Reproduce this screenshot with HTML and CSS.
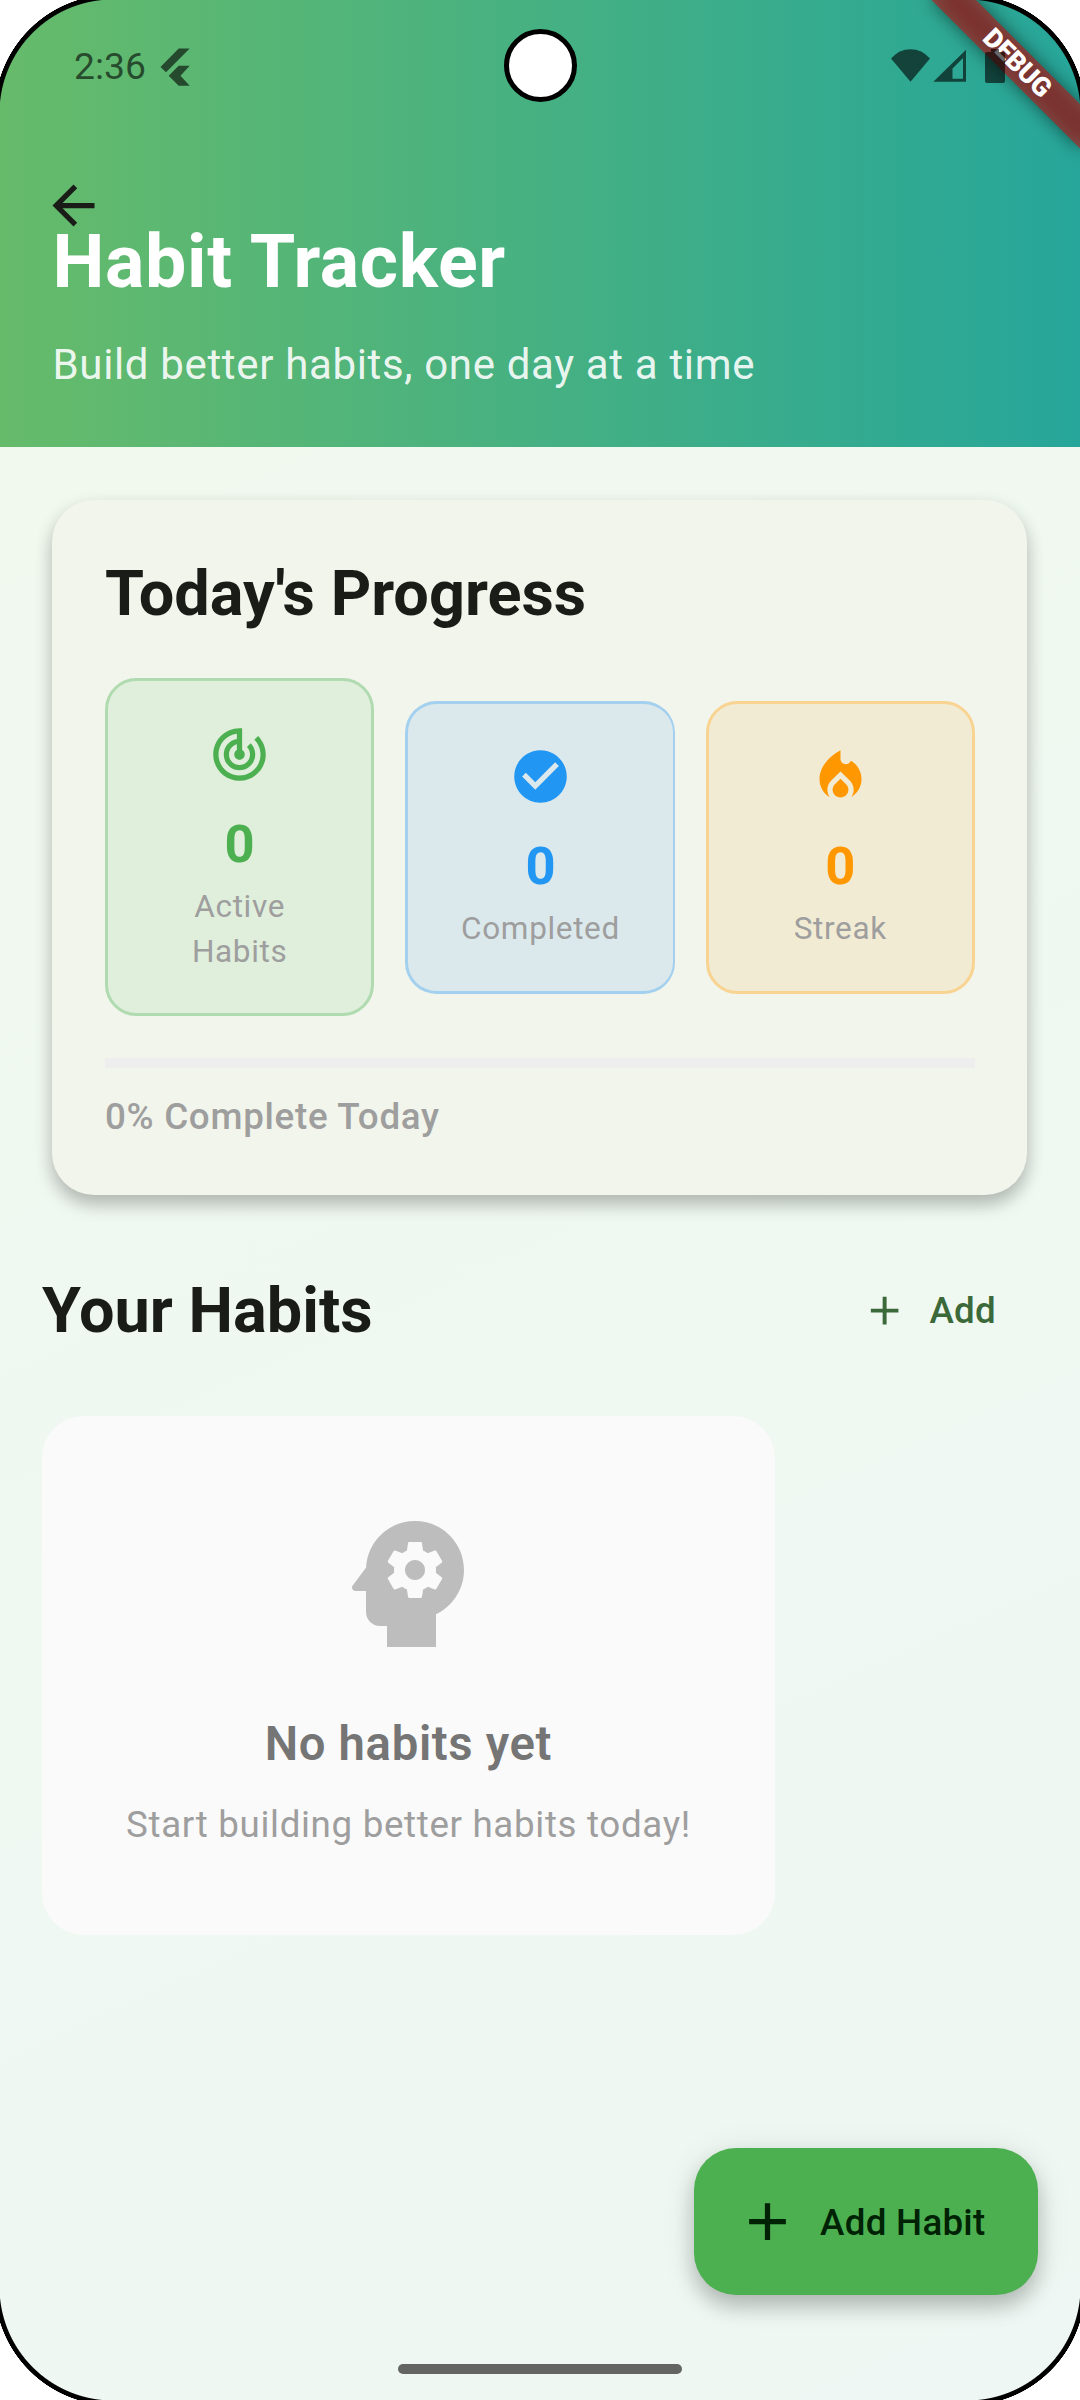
FILE: index.html
```html
<!DOCTYPE html>
<html lang="en">
<head>
<meta charset="utf-8">
<title>Habit Tracker</title>
<link rel="stylesheet" href="styles.css">
</head>
<body>
<div class="screen">
  <header class="header">
    <h1 class="header-title">Habit Tracker</h1>
    <p class="header-subtitle">Build better habits, one day at a time</p>
    <svg class="back" viewBox="0 0 24 24"><path d="M20 11H7.83l5.59-5.59L12 4l-8 8 8 8 1.41-1.41L7.83 13H20v-2z"/></svg>
  </header>

  <main class="content">
    <section class="progress-card">
      <h2 class="heading">Today's Progress</h2>
      <div class="stats">
        <div class="stat stat-green">
          <svg class="stat-icon" viewBox="0 0 24 24"><path d="M19.07 4.93l-1.41 1.41C19.1 7.79 20 9.79 20 12c0 4.42-3.58 8-8 8s-8-3.58-8-8c0-4.08 3.05-7.44 7-7.93v2.02C8.16 6.57 6 9.03 6 12c0 3.31 2.69 6 6 6s6-2.69 6-6c0-1.66-.67-3.16-1.76-4.24l-1.41 1.41C15.55 9.9 16 10.9 16 12c0 2.21-1.79 4-4 4s-4-1.79-4-4c0-1.86 1.28-3.41 3-3.86v2.14c-.6.35-1 .98-1 1.72 0 1.1.9 2 2 2s2-.9 2-2c0-.74-.4-1.38-1-1.72V2h-1C6.48 2 2 6.48 2 12s4.48 10 10 10 10-4.48 10-10c0-2.76-1.12-5.26-2.93-7.07z"/></svg>
          <span class="stat-value">0</span>
          <span class="stat-label">Active Habits</span>
        </div>
        <div class="stat stat-blue">
          <svg class="stat-icon" viewBox="0 0 24 24"><path d="M12 2C6.48 2 2 6.48 2 12s4.48 10 10 10 10-4.48 10-10S17.52 2 12 2zm-2 15l-5-5 1.41-1.41L10 14.17l7.59-7.59L19 8l-9 9z"/></svg>
          <span class="stat-value">0</span>
          <span class="stat-label">Completed</span>
        </div>
        <div class="stat stat-orange">
          <svg class="stat-icon" viewBox="0 0 24 24"><path d="M12 12.9l-2.13 2.09C9.31 15.55 9 16.28 9 17.06 9 18.68 10.35 20 12 20s3-1.32 3-2.94c0-.78-.31-1.52-.87-2.07L12 12.9z"/><path d="M16 6l-.44.55C14.38 8.02 12 7.19 12 5.3V2S4 6 4 13c0 2.92 1.56 5.47 3.89 6.86-.56-.79-.89-1.76-.89-2.8 0-1.32.52-2.56 1.47-3.5L12 10.1l3.53 3.47c.95.93 1.47 2.17 1.47 3.5 0 1.02-.31 1.96-.85 2.75 1.89-1.15 3.29-3.06 3.71-5.3.66-3.55-1.07-6.9-3.86-8.52z"/></svg>
          <span class="stat-value">0</span>
          <span class="stat-label">Streak</span>
        </div>
      </div>
      <div class="track"></div>
      <p class="track-label">0% Complete Today</p>
    </section>

    <section class="habits">
      <div class="habits-bar">
        <h2 class="heading">Your Habits</h2>
        <button class="add">
          <svg class="add-icon" viewBox="0 0 24 24"><path d="M19 13h-6v6h-2v-6H5v-2h6V5h2v6h6v2z"/></svg>
          <span>Add</span>
        </button>
      </div>
      <div class="empty">
        <svg class="empty-icon" viewBox="0 0 24 24"><path d="M13 8.57c-.79 0-1.43.64-1.43 1.43s.64 1.43 1.43 1.43 1.43-.64 1.43-1.43-.64-1.43-1.43-1.43z"/><path d="M13 3C9.25 3 6.2 5.94 6.02 9.64L4.1 12.2c-.25.33-.01.8.4.8H6v3c0 1.1.9 2 2 2h1v3h7v-4.68c2.36-1.12 4-3.53 4-6.32 0-3.87-3.13-7-7-7zm3 7c0 .13-.01.26-.02.39l.83.66c.08.06.1.16.05.25l-.8 1.39c-.05.09-.16.12-.24.09l-.99-.4c-.21.16-.43.29-.67.39L14 13.83c-.01.1-.1.17-.2.17h-1.6c-.1 0-.18-.07-.2-.17l-.15-1.06c-.25-.1-.47-.23-.68-.39l-.99.4c-.09.03-.2 0-.25-.09l-.8-1.39c-.05-.08-.03-.19.05-.25l.84-.66c-.01-.13-.02-.26-.02-.39s.02-.27.04-.39l-.85-.66c-.08-.06-.1-.16-.05-.26l.8-1.38c.05-.09.15-.12.24-.09l1 .4c.2-.15.43-.29.67-.39L12 6.17c.02-.1.1-.17.2-.17h1.6c.1 0 .18.07.2.17l.15 1.06c.24.1.46.23.67.39l1-.4c.09-.03.2 0 .24.09l.8 1.38c.05.09.03.2-.05.26l-.85.66c.03.12.04.25.04.39z"/></svg>
        <h3 class="empty-title">No habits yet</h3>
        <p class="empty-text">Start building better habits today!</p>
      </div>
    </section>
  </main>

  <button class="fab">
    <svg class="fab-icon" viewBox="0 0 24 24"><path d="M19 13h-6v6h-2v-6H5v-2h6V5h2v6h6v2z"/></svg>
    <span>Add Habit</span>
  </button>

  <!-- debug ribbon -->
  <svg class="ribbon" viewBox="0 0 180 180">
    <defs><filter id="soft" x="-30%" y="-150%" width="160%" height="400%"><feGaussianBlur stdDeviation="9"/></filter></defs>
    <g transform="translate(180 0) rotate(45)">
      <rect x="-105" y="73.5" width="210" height="31.5" fill="#000" fill-opacity=".5" filter="url(#soft)"/>
      <rect x="-105" y="73.5" width="210" height="31.5" fill="#b71c1c" fill-opacity=".627"/>
      <text class="ribbon-text" x="-42" y="97.8" textLength="84.5">DEBUG</text>
    </g>
  </svg>

  <!-- system status bar -->
  <div class="status">
    <span class="clock">2:36</span>
    <svg class="status-flutter" viewBox="160 48 30 38"><path d="M178.7 48.5h11L166 72.3l-5.5-5.3zM178.7 65.7h11l-9.2 10 9.2 10h-11l-10-10z"/></svg>
    <svg class="status-system" viewBox="890 48 116 36"><path d="M891 58.500Q899 49.300 910.500 49.300T930 58.500L910.500 81.700z"/><path fill-rule="evenodd" d="M966 49.700V81.700H933.300zM963 58L952.500 68.500V78.700H963z"/><path d="M991 49h8v3h4q2 0 2 2v27q0 2-2 2h-16q-2 0-2-2V54q0-2 2-2h4z"/></svg>
  </div>

  <!-- display cutout, rounded corners, gesture bar -->
  <div class="camera"></div>
  <div class="gesture"></div>
  <div class="corner corner-tl"></div>
  <div class="corner corner-tr"></div>
  <div class="corner corner-bl"></div>
  <div class="corner corner-br"></div>
</div>
</body>
</html>
```
FILE: styles.css
```css
* { box-sizing: border-box; margin: 0; padding: 0; }

body {
  background: #fff;
  font-family: Roboto, "Liberation Sans", sans-serif;
  color: #1a1c18;
}

button { border: 0; background: none; font: inherit; }
svg { display: block; flex: none; }

.screen {
  position: relative;
  width: 1080px;
  height: 2400px;
  overflow: hidden;
  background: linear-gradient(155.8deg, #f1f9ee, #eef7f3);
}

.header {
  position: relative;
  height: 447px;
  padding: 210px 52.500px 0;
  background: linear-gradient(to right, #66bb6a, #26a69a);
}
.header-title {
  font-size: 73.500px;
  line-height: 105px;
  letter-spacing: .656px;
  color: #fff;
}
.header-subtitle {
  margin-top: 20px;
  font-size: 42px;
  line-height: 60px;
  letter-spacing: .656px;
  color: rgba(255, 255, 255, .9);
}
.back {
  position: absolute;
  left: 42px;
  top: 174px;
  width: 63px;
  height: 63px;
  fill: #1a1c18;
}

.heading {
  font-size: 63px;
  line-height: 84px;
  font-weight: 700;
}

.progress-card {
  margin: 53px 53px 0 52px;
  padding: 52px 52px 52px 53px;
  border-radius: 42px;
  background: #f2f5eb;
  box-shadow: 0 10px 17px rgba(0, 0, 0, .22), 0 5px 20px rgba(0, 0, 0, .07);
}
.stats {
  display: grid;
  grid-template-columns: repeat(3, minmax(0, 1fr));
  align-items: center;
  gap: 31px;
  margin-top: 42px;
}
.stat {
  display: flex;
  flex-direction: column;
  align-items: center;
  padding: 41.625px;
  border: 3px solid;
  border-radius: 31.500px;
  text-align: center;
}
.stat-green { color: #4caf50; background: #e0eedc; border-color: #b0dab0; }
.stat-blue { color: #2196f3; background: #dce9ec; border-color: #a3d0ef; border-right-width: 2px; }
.stat-orange { color: #ff9800; background: #f2ebd4; border-color: #f8d391; }
.stat-icon { width: 63px; height: 63px; fill: currentColor; }
.stat-value {
  margin-top: 21px;
  font-size: 52.500px;
  line-height: 75px;
  font-weight: 700;
}
.stat-label {
  padding-top: 2px;
  margin-bottom: -2px;
  font-size: 31.500px;
  line-height: 45px;
  letter-spacing: .656px;
  color: #9e9e9e;
}
.track { margin-top: 42px; height: 10px; background: #eee; }
.track-label {
  margin-top: 22px;
  font-size: 36.750px;
  line-height: 53px;
  font-weight: 500;
  letter-spacing: .700px;
  color: #9e9e9e;
}

.habits { padding: 52.500px 42px 0; }
.habits-bar {
  display: flex;
  align-items: center;
  justify-content: space-between;
  height: 126px;
}
.habits-bar .heading { padding-top: 1px; }
.add {
  display: flex;
  align-items: center;
  gap: 21px;
  padding: 0 42px;
  font-size: 36.750px;
  font-weight: 500;
  letter-spacing: .262px;
  color: #3b6939;
}
.add-icon { width: 47.250px; height: 47.250px; fill: currentColor; }

.empty {
  display: flex;
  flex-direction: column;
  align-items: center;
  width: fit-content;
  margin-top: 42px;
  padding: 84px;
  border-radius: 42px;
  background: #fafafa;
}
.empty-icon { width: 168px; height: 168px; fill: #bdbdbd; }
.empty-title {
  margin-top: 42px;
  font-size: 47.250px;
  line-height: 68px;
  font-weight: 600;
  letter-spacing: .656px;
  color: #757575;
}
.empty-text {
  margin-top: 21px;
  font-size: 36.750px;
  line-height: 52.500px;
  letter-spacing: .656px;
  color: #9e9e9e;
}

.fab {
  position: absolute;
  right: 42px;
  bottom: 105px;
  display: flex;
  align-items: center;
  gap: 21px;
  height: 147px;
  padding: 0 52.500px 0 42px;
  border-radius: 42px;
  background: #4caf50;
  color: #002204;
  font-size: 36.750px;
  font-weight: 500;
  letter-spacing: .262px;
  box-shadow: 0 12px 20px rgba(0, 0, 0, .2), 0 5px 34px rgba(0, 0, 0, .1);
}
.fab-icon { width: 63px; height: 63px; fill: currentColor; }
.fab span { padding-top: 1px; }

.ribbon { position: absolute; right: 0; top: 0; width: 180px; height: 180px; }
.ribbon-text { font-size: 26.800px; font-weight: 900; fill: #fff; }

.status {
  position: absolute;
  left: 0;
  top: 0;
  display: flex;
  width: 1080px;
  padding: 44px 74px 0;
  color: rgba(0, 0, 0, .6);
}
.status svg { fill: currentColor; }
.clock { width: 72px; font-size: 37.300px; line-height: 44px; }
.status-flutter { width: 30px; height: 38px; margin: 4px auto 0 14px; }
.status-system { width: 116px; height: 36px; margin-top: 4px; }

.camera {
  position: absolute;
  left: 503.500px;
  top: 29.300px;
  width: 73px;
  height: 73px;
  border: 5px solid #000;
  border-radius: 50%;
  background: #fff;
}
.gesture {
  position: absolute;
  left: 398px;
  top: 2364px;
  width: 284px;
  height: 10px;
  border-radius: 5px;
  background: #636563;
}

.corner { position: absolute; width: 113px; height: 113px; }
.corner-tl { left: 0; top: 0; background: radial-gradient(circle at 100% 100%, transparent 113px, #000 114px, #000 118px, #fff 118.500px); }
.corner-tr { right: 0; top: 0; background: radial-gradient(circle at 0 100%, transparent 113px, #000 114px, #000 118px, #fff 118.500px); }
.corner-bl { left: 0; bottom: 0; background: radial-gradient(circle at 100% 0, transparent 113px, #000 114px, #000 118px, #fff 118.500px); }
.corner-br { right: 0; bottom: 0; background: radial-gradient(circle at 0 0, transparent 113px, #000 114px, #000 118px, #fff 118.500px); }
```
